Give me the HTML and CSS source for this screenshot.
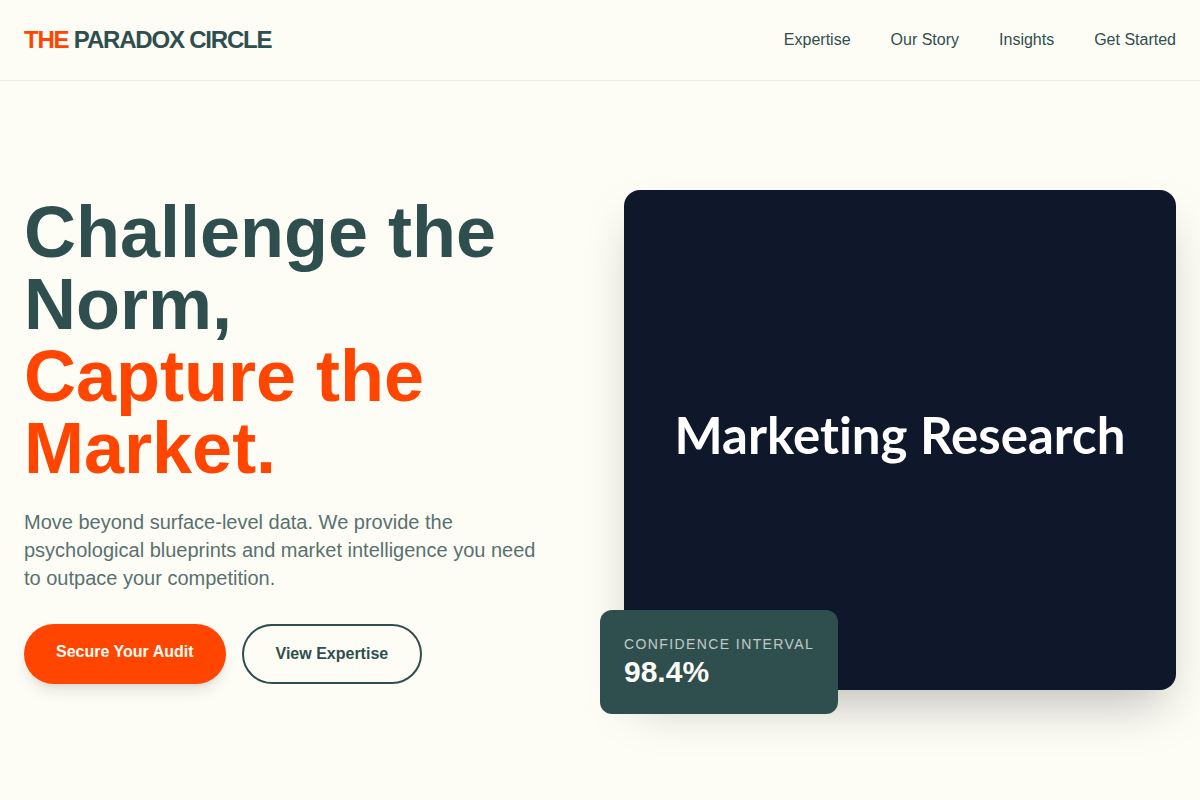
FILE: index.html
```html
<!DOCTYPE html>
<html lang="en">
<head>
<meta charset="utf-8">
<meta name="viewport" content="width=device-width, initial-scale=1">
<title>The Paradox Circle</title>
<link rel="stylesheet" href="styles.css">
</head>
<body>
<header class="site-header">
	<nav class="nav container">
		<a class="logo" href="#"><span class="accent">THE</span> PARADOX CIRCLE</a>
		<div class="nav-links">
			<a href="#expertise">Expertise</a>
			<a href="#story">Our Story</a>
			<a href="#insights">Insights</a>
			<a href="#contact">Get Started</a>
		</div>
	</nav>
</header>

<main>
	<section class="hero container">
		<div class="hero-text">
			<h1>Challenge the Norm, <br><span class="accent">Capture the Market.</span></h1>
			<p>Move beyond surface-level data. We provide the psychological blueprints and market intelligence you need to outpace your competition.</p>
			<div class="actions">
				<a class="btn btn-primary" href="#contact">Secure Your Audit</a>
				<a class="btn btn-outline" href="#expertise">View Expertise</a>
			</div>
		</div>
		<div class="hero-media">
			<div class="hero-image">Marketing Research</div>
			<div class="stat">
				<p class="stat-label">Confidence Interval</p>
				<p class="stat-value">98.4%</p>
			</div>
		</div>
	</section>
</main>
</body>
</html>
```
FILE: styles.css
```css
*{box-sizing:border-box;margin:0;padding:0;}
body{background:#fdfcf5;color:#2f4f4f;font-family:"Liberation Sans", Arial, sans-serif;font-size:16px;line-height:24px;}
a{color:inherit;text-decoration:none;}
.container{max-width:1280px;margin:0 auto;padding:0 24px;}
.accent{color:#ff4500;}

/* header */
.site-header{border-bottom:1px solid rgba(47, 79, 79, 0.1);}
.nav{display:flex;justify-content:space-between;align-items:center;height:80px;}
.logo{font-size:24px;line-height:32px;font-weight:bold;letter-spacing:-0.05em;}
.nav-links{display:flex;gap:40px;}

/* hero */
.hero{display:grid;grid-template-columns:1fr 1fr;gap:48px;align-items:center;min-height:calc(100vh - 82px);}
.hero h1{font-size:72px;line-height:72px;margin-bottom:24px;}
.hero-text p{font-size:20px;line-height:28px;max-width:512px;margin-bottom:32px;opacity:0.8;}
.actions{display:flex;gap:16px;}
.btn{border-radius:30px;font-weight:bold;padding:16px 32px;min-height:60px;}
.btn-primary{background:#ff4500;color:#fdfcf5;box-shadow:0 10px 15px -3px rgba(0, 0, 0, 0.1), 0 4px 6px -4px rgba(0, 0, 0, 0.1);}
.btn-outline{border:2px solid #2f4f4f;}

.hero-media{position:relative;}
.hero-image{display:flex;align-items:center;justify-content:center;height:500px;padding-bottom:10px;border-radius:16px;background:#0f172a;color:#fff;font:bold 51px/64px Lato, sans-serif;font-variant-ligatures:none;box-shadow:0 25px 50px -12px rgba(0, 0, 0, 0.25);}
.stat{position:absolute;left:-24px;bottom:-24px;padding:24px;border-radius:12px;background:#2f4f4f;color:#fdfcf5;}
.stat-label{font-size:14px;line-height:20px;letter-spacing:0.1em;text-transform:uppercase;opacity:0.7;}
.stat-value{font-size:30px;line-height:36px;font-weight:bold;}

@media (max-width:900px){
	.hero{grid-template-columns:1fr;padding-top:48px;padding-bottom:48px;}
	.hero h1{font-size:48px;line-height:48px;}
}
```
